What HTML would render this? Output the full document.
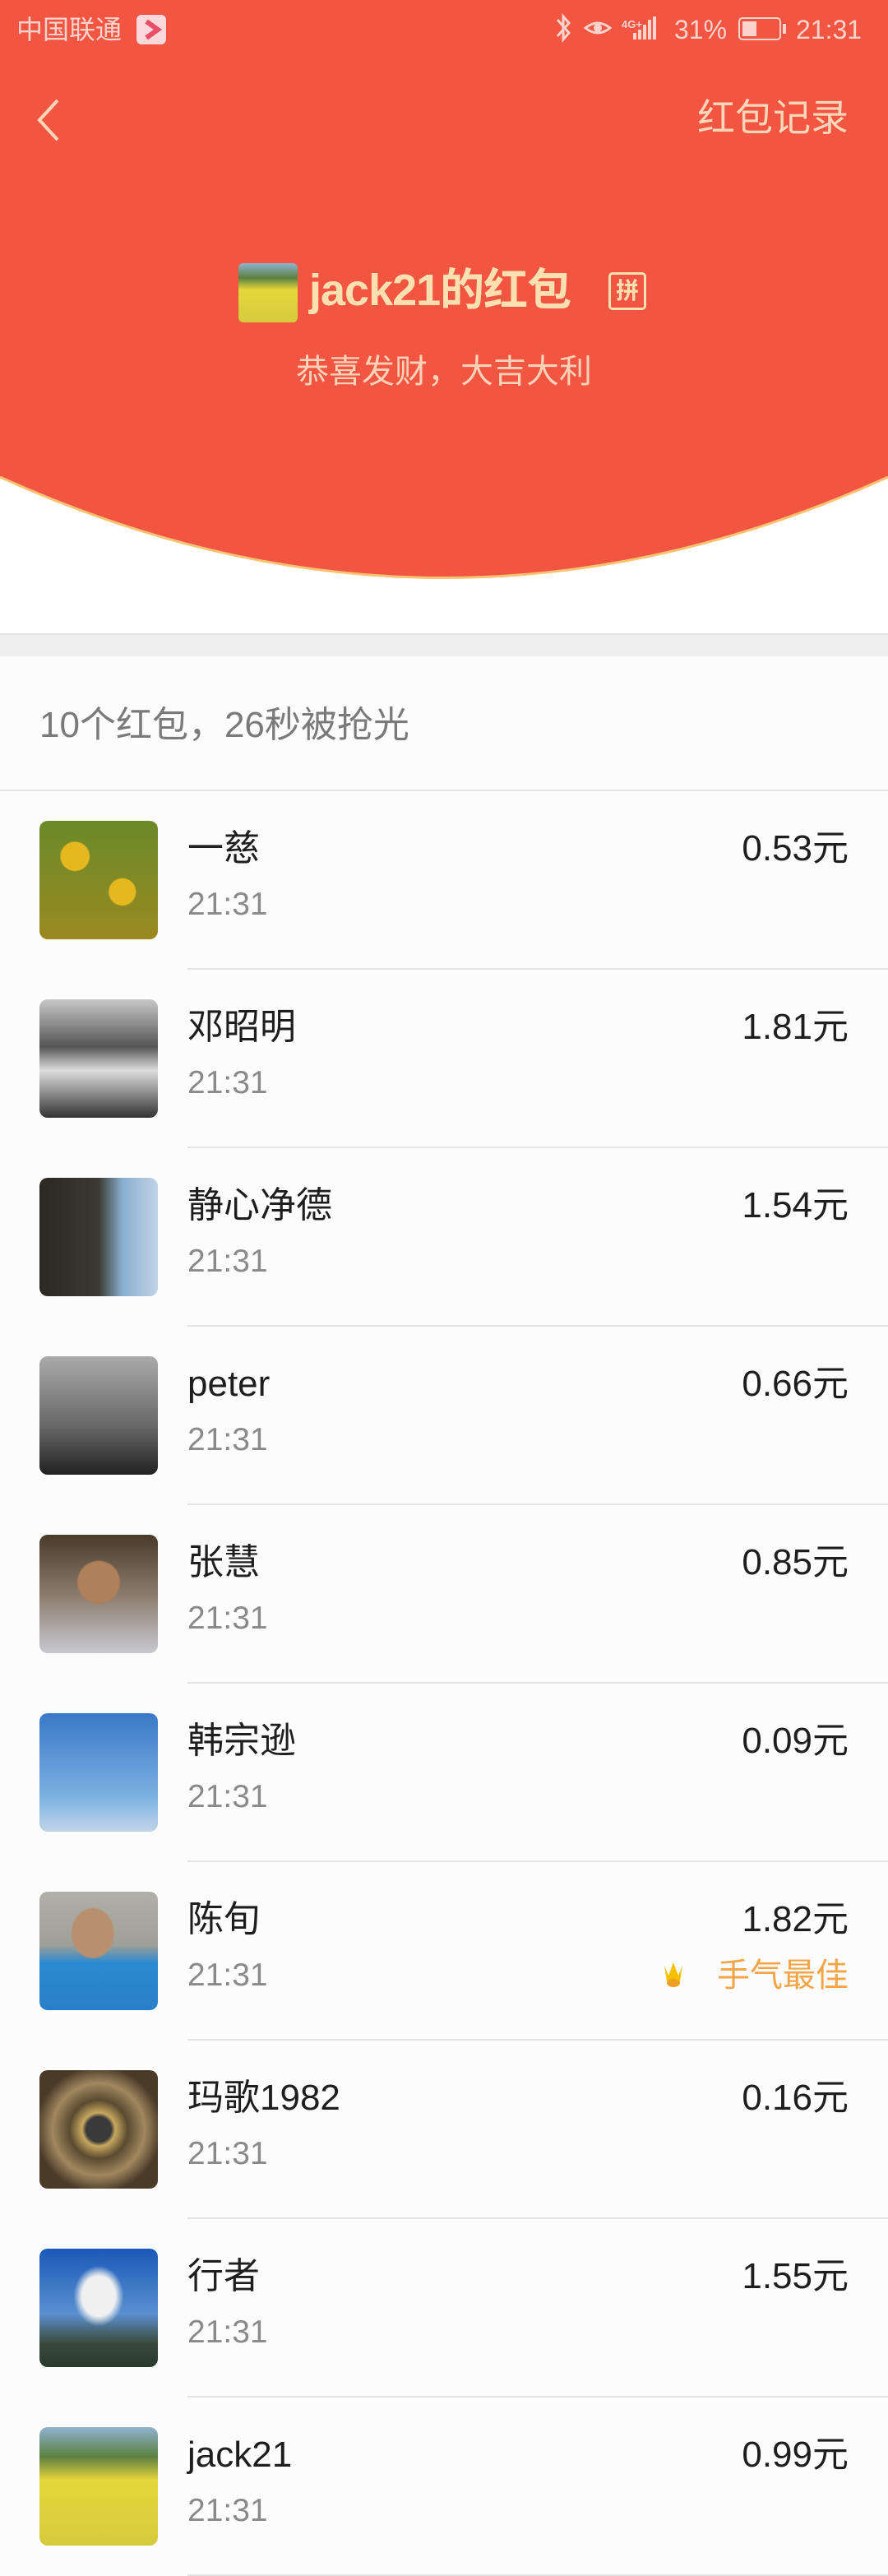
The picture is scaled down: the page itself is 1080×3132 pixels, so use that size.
<!DOCTYPE html>
<html><head><meta charset="utf-8"><style>
*{margin:0;padding:0;box-sizing:border-box}
body{width:1080px;height:3132px;background:#fcfcfc;font-family:"Liberation Sans","Noto Sans CJK SC",sans-serif;position:relative;overflow:hidden}
.abs{position:absolute}
.sb{color:#fdd3cb;font-size:32px;line-height:1}
.row{position:absolute;left:0;width:1080px;height:217px}
.av{position:absolute;left:48px;top:36px;width:144px;height:144px;border-radius:10px}
.nm{position:absolute;left:228px;top:48px;font-size:44px;color:#1e1e1e;line-height:1}
.tm{position:absolute;left:228px;top:118px;font-size:39px;color:#8a8a8a;line-height:1}
.amt{position:absolute;right:48px;top:48px;font-size:44px;color:#1e1e1e;line-height:1}
.dv{position:absolute;left:228px;right:0;bottom:0;height:2px;background:#e4e4e4}
</style></head><body>
<div class="abs" style="left:0;top:0;width:1080px;height:770px;background:#fff"></div>
<svg class="abs" style="left:0;top:0" width="1080" height="720"><path d="M0 0 H1080 V580 Q540 825 0 580 Z" fill="#f25643"/><path d="M0 580 Q540 825 1080 580" stroke="#f8c270" stroke-width="3" fill="none"/></svg>
<div class="abs sb" style="left:20px;top:20px;">中国联通</div>
<div class="abs" style="left:166px;top:18px;width:36px;height:36px;border-radius:6px;background:#fbd8dc"><svg width="36" height="36"><path d="M12 8 L26 18 L12 28" stroke="#e8506a" stroke-width="6" fill="none"/></svg></div>
<svg class="abs" style="left:672px;top:16px" width="300" height="40">
<path d="M6 8 L20 24 L13 32 L13 4 L20 12 L6 28" stroke="#fdd3cb" stroke-width="3" fill="none"/>
<path d="M40 18 Q55 6 70 18 Q55 30 40 18Z" stroke="#fdd3cb" stroke-width="3" fill="none"/><circle cx="55" cy="18" r="5" fill="#fdd3cb"/>
<text x="84" y="18" font-size="13" fill="#fdd3cb" font-weight="bold">4G+</text>
<rect x="98" y="24" width="4" height="8" fill="#fdd3cb"/><rect x="104" y="20" width="4" height="12" fill="#fdd3cb"/><rect x="110" y="14" width="4" height="18" fill="#fdd3cb"/><rect x="116" y="8" width="4" height="24" fill="#fdd3cb"/><rect x="122" y="4" width="4" height="28" fill="#fdd3cb"/>
<rect x="227" y="6" width="50" height="26" rx="4" stroke="#fdd3cb" stroke-width="2" fill="none"/><rect x="231" y="10" width="17" height="18" fill="#fdd3cb"/><rect x="280" y="13" width="4" height="12" fill="#fdd3cb"/>
</svg>
<div class="abs sb" style="left:820px;top:20px">31%</div>
<div class="abs sb" style="left:968px;top:20px">21:31</div>
<svg class="abs" style="left:40px;top:118px" width="40" height="56"><path d="M30 4 L8 28 L30 52" stroke="#fcd6b8" stroke-width="4" fill="none"/></svg>
<div class="abs" style="right:48px;top:120px;font-size:46px;color:#fcd6b8;line-height:1">红包记录</div>
<div class="abs" style="left:290px;top:320px;width:72px;height:72px;border-radius:6px;background:linear-gradient(180deg,#8fb3d0 0,#5c8040 25%,#e6d63a 45%,#d6cb3c 100%)"></div>
<div class="abs" style="left:376px;top:326px;font-size:54px;font-weight:bold;color:#fde0b0;line-height:1;letter-spacing:-1px">jack21的红包</div>
<div class="abs" style="left:740px;top:331px;width:46px;height:46px;border:3px solid #fde0b0;border-radius:5px;color:#fde0b0;font-size:28px;text-align:center;line-height:40px;font-weight:bold">拼</div>
<div class="abs" style="left:0;width:1080px;top:432px;text-align:center;font-size:40px;color:#fcd3b8;line-height:1">恭喜发财，大吉大利</div>
<div class="abs" style="left:0;top:770px;width:1080px;height:28px;background:#efefef;border-top:2px solid #e2e2e2"></div>
<div class="abs" style="left:48px;top:860px;font-size:44px;color:#7a7a7a;line-height:1">10个红包，26秒被抢光</div>
<div class="abs" style="left:0;top:960px;width:1080px;height:2px;background:#e4e4e4"></div>

<div class="row" style="top:962px"><div class="av" style="background:radial-gradient(circle at 30% 30%,#e6b820 0 12%,transparent 13%),radial-gradient(circle at 70% 60%,#e6b820 0 12%,transparent 13%),linear-gradient(#6a8a2a,#9a8a20)"></div><div class="nm">一慈</div><div class="tm">21:31</div><div class="amt">0.53元</div><div class="dv"></div></div>
<div class="row" style="top:1179px"><div class="av" style="background:linear-gradient(#c8c8c8,#555 40%,#ddd 60%,#333)"></div><div class="nm">邓昭明</div><div class="tm">21:31</div><div class="amt">1.81元</div><div class="dv"></div></div>
<div class="row" style="top:1396px"><div class="av" style="background:linear-gradient(90deg,#2a2a22 0,#3a3a30 50%,#8aaed0 70%,#c0d4e6)"></div><div class="nm">静心净德</div><div class="tm">21:31</div><div class="amt">1.54元</div><div class="dv"></div></div>
<div class="row" style="top:1613px"><div class="av" style="background:linear-gradient(#aaa,#666 60%,#222)"></div><div class="nm">peter</div><div class="tm">21:31</div><div class="amt">0.66元</div><div class="dv"></div></div>
<div class="row" style="top:1830px"><div class="av" style="background:radial-gradient(circle at 50% 40%,#b0805a 0 22%,transparent 24%),linear-gradient(#4a3a2a,#8a7a6a 50%,#c8c8d0)"></div><div class="nm">张慧</div><div class="tm">21:31</div><div class="amt">0.85元</div><div class="dv"></div></div>
<div class="row" style="top:2047px"><div class="av" style="background:linear-gradient(#3a78c8,#7ab0e0 70%,#c0d4e8)"></div><div class="nm">韩宗逊</div><div class="tm">21:31</div><div class="amt">0.09元</div><div class="dv"></div></div>
<div class="row" style="top:2264px"><div class="av" style="background:radial-gradient(ellipse at 45% 35%,#b89070 0 22%,transparent 24%),linear-gradient(#b0b0a8 0,#a0a098 45%,#2a8ad0 60%,#2a80c8)"></div><div class="nm">陈旬</div><div class="tm">21:31</div><div class="amt">1.82元</div>
<svg class="abs" style="left:806px;top:120px" width="26" height="34"><path d="M2 6 L7 18 L13 2 L19 18 L24 6 L21 25 L5 25Z" fill="#f5c000"/><ellipse cx="13" cy="27" rx="8" ry="5" fill="#f0a020"/></svg>
<div class="abs" style="right:48px;top:118px;font-size:40px;color:#f3a548;line-height:1">手气最佳</div><div class="dv"></div></div>
<div class="row" style="top:2481px"><div class="av" style="background:radial-gradient(circle,#3a3a3a 0 15%,#c8a860 20%,#5a4a30 35%,#a08860 55%,#4a3a28 75%)"></div><div class="nm">玛歌1982</div><div class="tm">21:31</div><div class="amt">0.16元</div><div class="dv"></div></div>
<div class="row" style="top:2698px"><div class="av" style="background:radial-gradient(ellipse at 50% 40%,#f0f0f0 0 20%,transparent 30%),linear-gradient(#1a58b8,#5a90d0 55%,#3a4a3a 80%,#2a3a2a)"></div><div class="nm">行者</div><div class="tm">21:31</div><div class="amt">1.55元</div><div class="dv"></div></div>
<div class="row" style="top:2915px"><div class="av" style="background:linear-gradient(180deg,#8fb3d0 0,#5c8040 25%,#e6d63a 45%,#d6cb3c 100%)"></div><div class="nm">jack21</div><div class="tm">21:31</div><div class="amt">0.99元</div><div class="dv"></div></div>
</body></html>
